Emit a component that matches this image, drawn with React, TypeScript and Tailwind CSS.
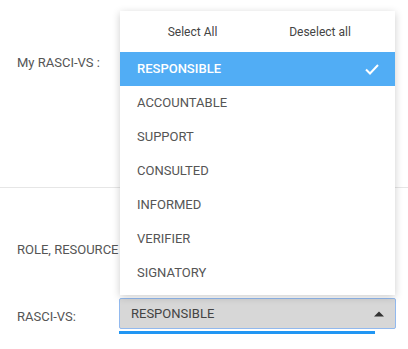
import React from 'react';

const options = ['RESPONSIBLE', 'ACCOUNTABLE', 'SUPPORT', 'CONSULTED', 'INFORMED', 'VERIFIER', 'SIGNATORY'];

export default function App() {
  const selected = 'RESPONSIBLE';

  return (
    <div className="relative w-[408px] h-[349px] bg-white text-[13px] text-[#555] font-['Roboto',sans-serif] overflow-hidden">
      {/* top section */}
      <div className="h-[188px] border-b border-[#e6e6e6] px-[17px] pt-[54px]">
        <div className="leading-[17px]">My RASCI-VS :</div>
      </div>

      {/* role row */}
      <div className="px-[17px] pt-[53px] h-[110px] flex">
        <div className="leading-[17px]">ROLE, RESOURCE</div>
      </div>

      {/* rasci-vs select */}
      <div className="flex items-start pl-[17px]">
        <div className="w-[102px] pt-[10px] leading-[17px]">RASCI-VS:</div>
        <div className="flex flex-col">
          <div className="w-[277px] h-[31px] bg-[#d7d7d7] border border-[#92b9ee] rounded-[2px] flex items-center justify-between pl-[11px] pr-[11px] text-[#444]">
            <span>RESPONSIBLE</span>
            <svg width="10" height="6" viewBox="0 0 10 6">
              <path d="M0 5.5 L5 0.5 L10 5.5 Z" fill="#333" />
            </svg>
          </div>
          <div className="w-[256px] h-[3px] bg-[#2196f3] mt-[2px]" />
        </div>
      </div>

      {/* dropdown menu */}
      <div className="absolute left-[120px] top-[11px] w-[275px] bg-white shadow-[0_2px_8px_rgba(0,0,0,0.2)] pb-[5px]">
        <div className="h-[41px] flex items-center text-[12px] text-[#444]">
          <div className="w-[145px] text-center">Select All</div>
          <div className="w-[110px] text-center">Deselect all</div>
        </div>
        {options.map((o) => (
          <div
            key={o}
            className={
              o === selected
                ? 'h-[34px] flex items-center justify-between pl-[17px] pr-[16px] bg-[#51adf5] text-white font-medium'
                : 'h-[34px] flex items-center pl-[17px] text-[#555]'
            }
          >
            <span>{o}</span>
            {o === selected && (
              <svg width="14" height="11" viewBox="0 0 14 11">
                <path d="M1 5.5 L5 9.5 L13 1" fill="none" stroke="white" strokeWidth="2" />
              </svg>
            )}
          </div>
        ))}
      </div>
    </div>
  );
}
